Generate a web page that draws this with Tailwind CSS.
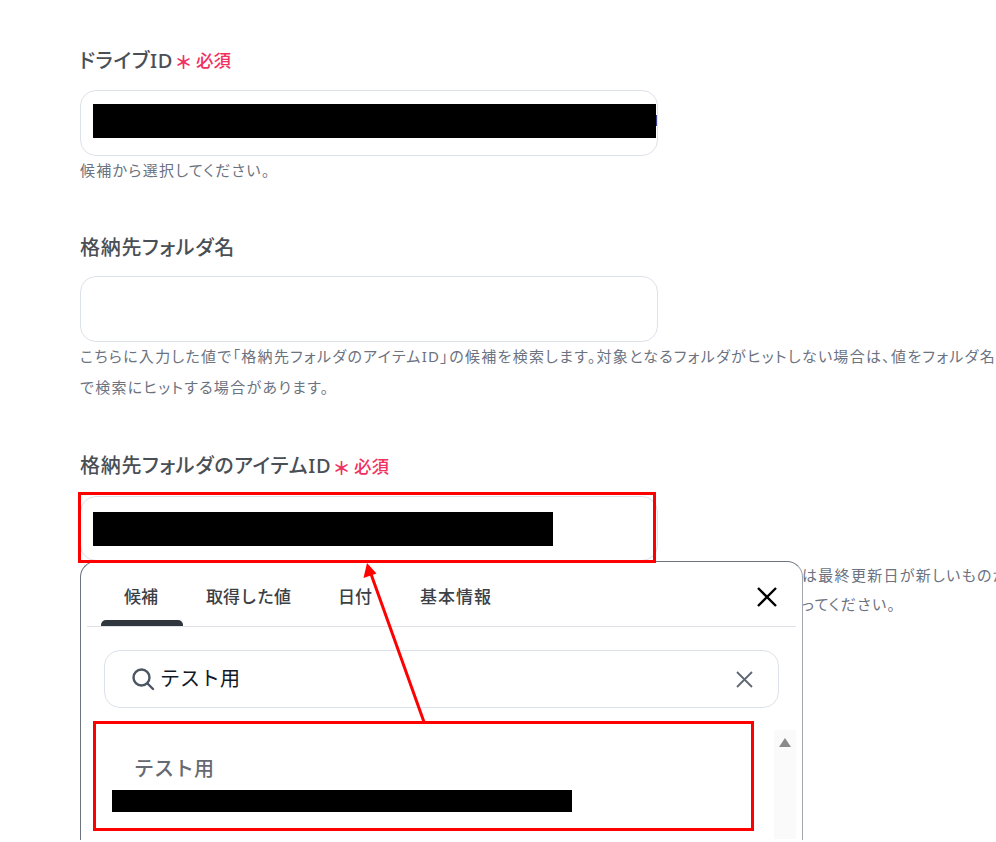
<!DOCTYPE html>
<html lang="ja">
<head>
    <meta charset="UTF-8">
    <meta name="viewport" content="width=device-width, initial-scale=1.0">
    <title>格納先フォルダの設定</title>
    <script src="https://cdn.jsdelivr.net/npm/@tailwindcss/browser@4"></script>
</head>
<body class="bg-white font-['Noto_Sans','Noto_Sans_CJK_JP',sans-serif] text-[#4a4f55]">
    <div class="relative w-[996px] h-[842px] overflow-hidden pl-[80px] pt-[46px]">

        <!-- drive -->
        <div class="h-[28px] flex items-center text-[20px] leading-[28px] font-medium tracking-[0.7px] [font-feature-settings:'palt']">
            <span class="-ml-[1px] mt-[1px]">ドライブID</span>
            <span class="ml-[3px] text-[#f0305f] text-[18px] font-bold leading-[28px] mt-[4px] tracking-normal">＊</span>
            <span class="ml-[5px] text-[#f0305f] text-[17.500px] font-medium tracking-normal">必須</span>
        </div>
        <div class="relative mt-[16px] w-[578px] h-[66px] rounded-[16px] border border-[#dde1ea] bg-white pl-[12px] pt-[13px]">
            <div class="w-[563px] h-[34px] bg-black"></div>
            <span class="absolute left-[575px] top-[24px] w-[1px] h-[11px] bg-[#3b3f8f]"></span>
        </div>
        <p class="mt-[3px] h-[22px] text-[15px] leading-[22px] tracking-[1.300px] text-[#6b7280] whitespace-nowrap [font-feature-settings:'palt']">候補から選択してください。</p>

        <!-- folder name -->
        <div class="mt-[53px] h-[28px] flex items-center text-[20px] leading-[28px] font-medium tracking-[0.7px] [font-feature-settings:'palt']">格納先フォルダ名</div>
        <div class="mt-[14px] w-[578px] h-[66px] rounded-[16px] border border-[#dde1ea] bg-white"></div>
        <p class="mt-[-1px] text-[15px] leading-[31px] tracking-[1.300px] text-[#6b7280] whitespace-nowrap [font-feature-settings:'palt']">こちらに入力した値で「格納先フォルダのアイテムID」の候補を検索します。対象となるフォルダがヒットしない場合は、値をフォルダ名<br>で検索にヒットする場合があります。</p>

        <!-- item id -->
        <div class="mt-[49px] h-[28px] flex items-center text-[20px] leading-[28px] font-medium tracking-[0.7px] [font-feature-settings:'palt']">
            <span>格納先フォルダのアイテムID</span>
            <span class="ml-[3px] text-[#f0305f] text-[18px] font-bold leading-[28px] mt-[4px] tracking-normal">＊</span>
            <span class="ml-[5px] text-[#f0305f] text-[17.500px] font-medium tracking-normal">必須</span>
        </div>
        <div class="mt-[16px] w-[578px] h-[65px] rounded-[16px] border border-[#dde1ea] bg-white pl-[12px] pt-[15px]">
            <div class="w-[460px] h-[34px] bg-black"></div>
        </div>
        <p class="pl-[722px] text-[15px] leading-[29px] tracking-[1.300px] text-[#6b7280] whitespace-nowrap [font-feature-settings:'palt']">は最終更新日が新しいものか<br>ってください。</p>

        <!-- picker popup -->
        <div class="absolute left-[80px] top-[561px] w-[723px] h-[279px] rounded-t-[16px] border border-b-0 border-[#6b7280] border-r-[#a3a8af] bg-white">
            <div class="relative mx-[6px] h-[65px] border-b border-[#dfe2e8] flex items-start pl-[14px] text-[17px] font-medium text-[#3b4046]">
                <div class="relative w-[82px] h-[64px] flex justify-center pt-[23px] pr-[2px] leading-[24px]">候補
                    <span class="absolute left-0 right-0 bottom-0 h-[6px] rounded-t-[5px] bg-[#2f363d]"></span>
                </div>
                <div class="ml-[23px] pt-[23px] leading-[24px]">取得した値</div>
                <div class="ml-[47px] pt-[23px] leading-[24px]">日付</div>
                <div class="ml-[48px] pt-[23px] leading-[24px] tracking-[1px]">基本情報</div>
                <svg class="absolute right-[18px] top-[24px] w-[22px] h-[22px]" viewBox="0 0 22 22" fill="none" stroke="#000" stroke-width="2.4"><path d="M2 2l18 18M20 2L2 20"/></svg>
            </div>
            <div class="mt-[23px] ml-[23px] w-[675px] h-[58px] rounded-[16px] border border-[#dde1ea] flex items-center pl-[26px] pr-[25px]">
                <svg class="w-[24px] h-[24px] shrink-0" viewBox="0 0 24 24" fill="none" stroke="#4b5563" stroke-width="2.4" stroke-linecap="round"><circle cx="10.500" cy="10.500" r="8"/><path d="M16.500 16.500l5.500 5.500"/></svg>
                <span class="ml-[5px] text-[20px] text-[#111827]">テスト用</span>
                <svg class="ml-auto w-[17px] h-[17px]" viewBox="0 0 17 17" fill="none" stroke="#5f6873" stroke-width="1.8"><path d="M1 1l15 15M16 1L1 16"/></svg>
            </div>
            <div class="relative">
                <div class="pl-[53px] pt-[47px] text-[20px] leading-[28px] font-medium text-[#666b72]">テスト用</div>
                <div class="ml-[31px] mt-[7px] w-[460px] h-[22px] bg-black"></div>
                <div class="absolute left-[693px] top-[22px] w-[22px] h-[109px] bg-[#fafafa] flex justify-center pt-[8px]">
                    <span class="w-0 h-0 border-x-[6px] border-x-transparent border-b-[9px] border-b-[#8a8a8a]"></span>
                </div>
            </div>
        </div>

        <!-- annotations -->
        <div class="absolute left-[78px] top-[492px] w-[578px] h-[71px] border-[3px] border-[#ff0000]"></div>
        <div class="absolute left-[93px] top-[721px] w-[661px] h-[110px] border-[3px] border-[#ff0000]"></div>
        <svg class="absolute left-0 top-0 w-[996px] h-[842px] pointer-events-none" viewBox="0 0 996 842" fill="none">
            <path d="M424 722L371 574" stroke="#ff0000" stroke-width="3"/>
            <path d="M367 563l-3.500 15 13-4.500z" fill="#ff0000"/>
        </svg>
    </div>
</body>
</html>
